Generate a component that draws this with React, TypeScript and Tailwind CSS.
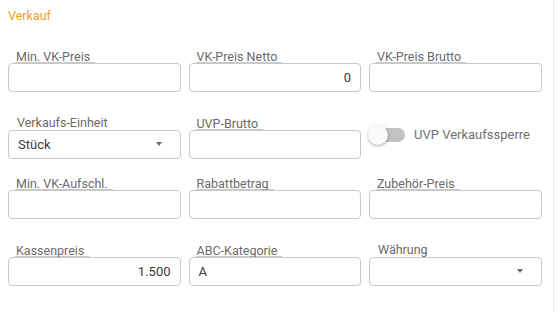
import React from "react";

type FieldProps = {
  label: string;
  value?: string;
  align?: "left" | "right";
};

function TextField({ label, value = "", align = "left" }: FieldProps) {
  return (
    <div className="flex flex-col justify-end">
      <div className="flex">
        <span className="ml-[7px] pl-[1px] pr-[5px] border-b border-[#c8c8c8] text-[12.5px] leading-[10px] text-[#6a6a6a]">
          {label}
        </span>
      </div>
      <div
        className={`h-[29px] border border-[#c8c8c8] rounded-[4px] flex items-center px-[9px] text-[13px] text-[#3a3a3a] ${
          align === "right" ? "justify-end" : "justify-start"
        }`}
      >
        {value}
      </div>
    </div>
  );
}

function SelectField({ label, value = "" }: FieldProps) {
  return (
    <div className="flex flex-col justify-end">
      <span className="ml-[8px] pl-[1px] pb-[2px] text-[12.5px] leading-[10px] text-[#6a6a6a]">
        {label}
      </span>
      <div className="h-[29px] border border-[#c8c8c8] rounded-[4px] flex items-center justify-between pl-[9px] pr-[18px] text-[13px] text-[#3a3a3a]">
        <span>{value}</span>
        <span className="w-0 h-0 border-l-[3px] border-r-[3px] border-t-[4px] border-l-transparent border-r-transparent border-t-[#6b6b6b] -mt-[2px]" />
      </div>
    </div>
  );
}

function Toggle({ label }: { label: string }) {
  return (
    <div className="self-end mb-[14px] flex items-center gap-[10px]">
      <div className="relative w-[36px] h-[20px] -ml-[1px]">
        <div className="absolute left-[3px] top-[3px] w-[34px] h-[14px] rounded-full bg-[#c2c2c2]" />
        <div className="absolute left-0 top-0 w-[20px] h-[20px] rounded-full bg-[#fafafa] shadow-[0_1px_3px_rgba(0,0,0,0.35)]" />
      </div>
      <span className="text-[13px] text-[#707070]">{label}</span>
    </div>
  );
}

export default function App() {
  return (
    <div className="w-[560px] h-[312px] bg-white" style={{ fontFamily: "Roboto, 'Liberation Sans', sans-serif" }}>
      <div className="w-[554px] h-full border-r border-[#ececec] pl-[8px] pt-[8px]">
        <h2 className="text-[12.5px] leading-[16px] text-[#f2a11f]">Verkauf</h2>

        <div className="mt-[28px] grid grid-cols-[172.5px_172.5px_172.5px] gap-x-[8px] items-end">
          <TextField label="Min. VK-Preis" />
          <TextField label="VK-Preis Netto" value="0" align="right" />
          <TextField label="VK-Preis Brutto" />
        </div>

        <div className="mt-[26px] grid grid-cols-[172.5px_172.5px_172.5px] gap-x-[8px] items-end">
          <SelectField label="Verkaufs-Einheit" value="Stück" />
          <TextField label="UVP-Brutto" />
          <Toggle label="UVP Verkaufssperre" />
        </div>

        <div className="mt-[20px] grid grid-cols-[172.5px_172.5px_172.5px] gap-x-[8px] items-end">
          <TextField label="Min. VK-Aufschl." />
          <TextField label="Rabattbetrag" />
          <TextField label="Zubehör-Preis" />
        </div>

        <div className="mt-[26px] grid grid-cols-[172.5px_172.5px_172.5px] gap-x-[8px] items-end">
          <TextField label="Kassenpreis" value="1.500" align="right" />
          <TextField label="ABC-Kategorie" value="A" />
          <SelectField label="Währung" />
        </div>
      </div>
    </div>
  );
}
